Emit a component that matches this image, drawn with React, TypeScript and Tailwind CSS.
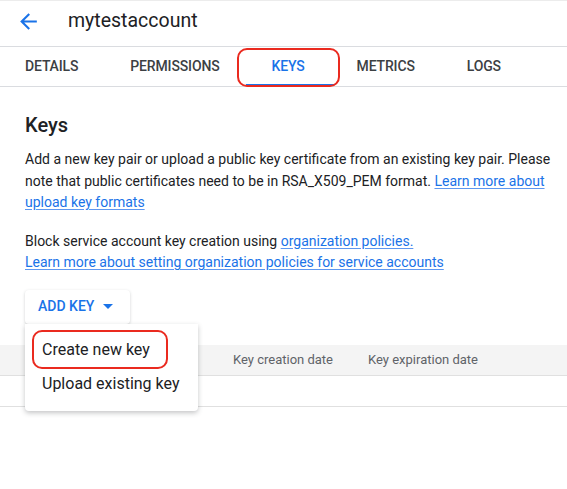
const tabs = ["DETAILS", "PERMISSIONS", "KEYS", "METRICS", "LOGS"];

const App = () => {
  return (
    <div
      className="w-[567px] h-[489px] bg-white overflow-hidden relative border-t border-[#ececec]"
      style={{ fontFamily: "Roboto, 'Liberation Sans', sans-serif" }}
    >
      {/* Encabezado */}
      <div className="h-[46px] flex items-center border-b border-[#dadce0] pb-[5px]">
        <svg width="25" height="25" viewBox="0 0 24 24" className="ml-[16px]" fill="#1a73e8">
          <path d="M20 11H7.83l5.59-5.59L12 4l-8 8 8 8 1.41-1.41L7.83 13H20v-2z" />
        </svg>
        <h1 className="ml-[27px] text-[19.5px] text-[#202124] leading-none">mytestaccount</h1>
      </div>

      {/* Pestañas */}
      <div className="h-[40px] flex items-stretch border-b border-[#dadce0] pl-[25px] gap-[52px]">
        {tabs.map((tab) => (
          <div
            key={tab}
            className={`relative flex items-center text-[14px] font-medium tracking-[-0.15px] ${
              tab === "KEYS" ? "text-[#1a73e8]" : "text-[#3c4043]"
            }`}
          >
            {tab}
            {tab === "KEYS" && (
              <>
                <span className="absolute left-[-26px] right-[-29px] bottom-0 h-[2px] bg-[#1a73e8]" />
                <span className="absolute left-[-35px] right-[-35px] top-[1px] bottom-[-1px] border-2 border-[#ea2a1f] rounded-[10px]" />
              </>
            )}
          </div>
        ))}
      </div>

      {/* Contenido */}
      <div className="pl-[25px] pr-[10px]">
        <h2 className="mt-[24px] text-[20px] font-medium text-[#202124] leading-[28px]">Keys</h2>
        <p className="mt-[10px] text-[14px] leading-[21.5px] text-[#202124]">
          Add a new key pair or upload a public key certificate from an existing key pair. Please
          note that public certificates need to be in RSA_X509_PEM format.{" "}
          <a className="text-[#1a73e8] underline underline-offset-2 decoration-[#5e97f0]">
            Learn more about upload key formats
          </a>
        </p>
        <p className="mt-[17px] text-[14px] leading-[21.5px] text-[#202124]">
          Block service account key creation using{" "}
          <a className="text-[#1a73e8] underline underline-offset-2 decoration-[#5e97f0]">
            organization policies.
          </a>
          <br />
          <a className="text-[#1a73e8] underline underline-offset-2 decoration-[#5e97f0]">
            Learn more about setting organization policies for service accounts
          </a>
        </p>

        {/* Botón y menú */}
        <div className="relative mt-[16px] h-[34px] w-[105px]">
          <button className="w-full h-full flex items-center pl-[13px] rounded-[4px] bg-white shadow-[0_1px_3px_rgba(60,64,67,0.25)] text-[14px] font-medium text-[#1a73e8]">
            ADD KEY
            <svg width="10" height="5" viewBox="0 0 10 5" className="ml-[9px]" fill="#1a73e8">
              <path d="M0 0l5 5 5-5z" />
            </svg>
          </button>
          <div className="absolute z-10 left-0 top-[34px] w-[173px] h-[87px] bg-white rounded-b-[4px] shadow-[0_2px_5px_rgba(60,64,67,0.3)] pt-[9px]">
            <div className="relative h-[34px] flex items-center pl-[17px] text-[16px] text-[#202124]">
              Create new key
              <span className="absolute left-[7px] w-[136px] top-[-3px] h-[39px] border-2 border-[#ea2a1f] rounded-[10px]" />
            </div>
            <div className="h-[34px] flex items-center pl-[17px] text-[16px] text-[#202124]">
              Upload existing key
            </div>
          </div>
        </div>
      </div>

      {/* Tabla */}
      <div className="mt-[21px]">
        <div className="h-[31px] bg-[#f4f4f4] border-b border-[#e0e0e0] flex items-center text-[13px] text-[#5f6368]">
          <span className="ml-[233px]">Key creation date</span>
          <span className="ml-[35px]">Key expiration date</span>
        </div>
        <div className="h-[31px] border-b border-[#e0e0e0]" />
      </div>
    </div>
  );
};

export default App;
